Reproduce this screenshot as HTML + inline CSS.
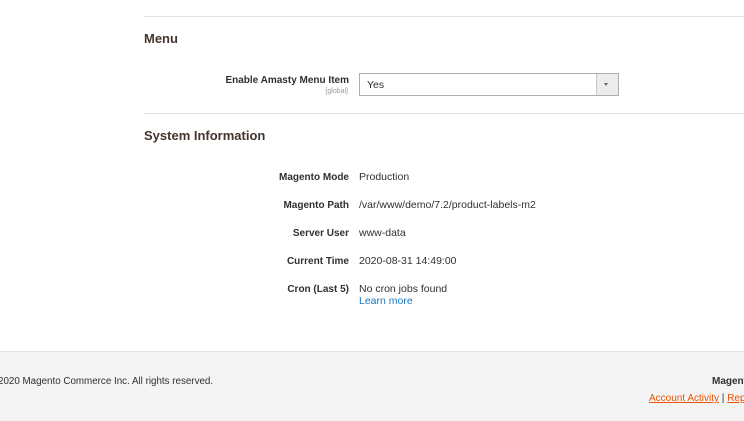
<!DOCTYPE html>
<html><head><style>
body{margin:0;width:744px;height:420px;overflow:hidden;background:#fff;font-family:"Liberation Sans",sans-serif;color:#303030;position:relative}
.a{position:absolute;white-space:nowrap}
.hr{position:absolute;left:144px;right:0;height:1px;background:#e3e3e3}
.h{font-size:13px;font-weight:bold;color:#41362f;left:144px}
.l{font-size:10px;font-weight:bold;right:395px;text-align:right;color:#303030}
.v{font-size:10.5px;left:359px;color:#303030}
</style></head><body>
<div class="hr" style="top:16px"></div>
<div class="a h" style="top:31px">Menu</div>
<div class="a l" style="top:75px">Enable Amasty Menu Item</div>
<div class="a" style="top:88px;right:396px;font-size:7px;color:#999">[global]</div>
<div class="a" style="left:359px;top:73px;width:258px;height:21px;border:1px solid #adadad;background:#fff"></div>
<div class="a" style="left:596px;top:74px;width:21px;height:21px;background:#ececec;border-left:1px solid #c8c8c8"></div>
<div class="a" style="left:604px;top:83px;width:0;height:0;border-left:2.5px solid transparent;border-right:2.5px solid transparent;border-top:3px solid #666"></div>
<div class="a v" style="top:79px;left:367px">Yes</div>
<div class="hr" style="top:113px"></div>
<div class="a h" style="top:128px">System Information</div>
<div class="a l" style="top:172px">Magento Mode</div><div class="a v" style="top:171px">Production</div>
<div class="a l" style="top:200px">Magento Path</div><div class="a v" style="top:199px">/var/www/demo/7.2/product-labels-m2</div>
<div class="a l" style="top:228px">Server User</div><div class="a v" style="top:227px">www-data</div>
<div class="a l" style="top:256px">Current Time</div><div class="a v" style="top:255px">2020-08-31 14:49:00</div>
<div class="a l" style="top:284px">Cron (Last 5)</div><div class="a v" style="top:283px">No cron jobs found</div>
<div class="a v" style="top:295px;color:#1979c3">Learn more</div>
<div class="a" style="left:0;top:351px;width:744px;height:69px;background:#f4f4f4;border-top:1px solid #e3e3e3"></div>
<div class="a" style="left:-2px;top:376px;font-size:9.8px;color:#303030">2020 Magento Commerce Inc. All rights reserved.</div>
<div class="a" style="left:712px;top:376px;font-size:10px;font-weight:bold;color:#303030">Magento</div>
<div class="a" style="left:649px;top:393px;font-size:10px;color:#303030"><span style="color:#eb5202;text-decoration:underline">Account Activity</span> | <span style="color:#eb5202;text-decoration:underline">Report</span></div>
</body></html>
